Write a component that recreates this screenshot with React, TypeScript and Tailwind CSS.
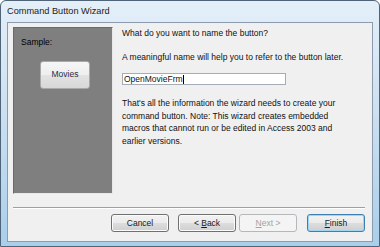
import React from 'react';

const font = { fontFamily: '"Liberation Sans", Arial, sans-serif' };

const WizardButton: React.FC<{
  label: React.ReactNode;
  variant?: 'normal' | 'default' | 'disabled';
}> = ({ label, variant = 'normal' }) => {
  const border =
    variant === 'default'
      ? 'border-[#3c7fb1] shadow-[inset_0_0_0_1px_#9fd5f5]'
      : variant === 'disabled'
        ? 'border-[#b5b8bb]'
        : 'border-[#707070] shadow-[inset_0_0_0_1px_#fbfbfb]';
  const bg =
    variant === 'disabled'
      ? 'bg-[#f4f4f4]'
      : 'bg-[linear-gradient(#f2f2f2_0%,#ebebeb_50%,#dddddd_51%,#cfcfcf_100%)]';
  const text = variant === 'disabled' ? 'text-[#a3a3a3]' : 'text-[#1a1a1a]';
  return (
    <div
      className={`w-[58px] h-[18px] rounded-[3px] border flex items-center justify-center text-[8.5px] ${border} ${bg} ${text}`}
    >
      {label}
    </div>
  );
};

export default function App() {
  return (
    <div
      className="w-[380px] h-[247px] flex flex-col bg-[linear-gradient(180deg,#e4eff8_0%,#cfe2f2_40%,#a9cfea_100%)] border border-[#4f6479] rounded-t-[6px]"
      style={font}
    >
      {/* title bar */}
      <div className="h-[21px] flex items-center pl-[6px] text-[9.2px] text-[#1b1b1b] shrink-0">
        Command Button Wizard
      </div>

      {/* client area */}
      <div className="mx-[6px] h-[220px] border border-[#8c9cae] bg-[#f0f0f0] flex flex-col">
        <div className="flex pt-[4px] pl-[5px]">
          {/* sample panel */}
          <div className="w-[100px] h-[167px] bg-[#7f7f7f] border border-[#6a6a6a] border-r-[#e8e8e8] border-b-[#e8e8e8] flex flex-col">
            <div className="pl-[7px] pt-[8px] text-[8.5px] text-black">Sample:</div>
            <div className="ml-[26px] mt-[12px] w-[50px] h-[28px] rounded-[3px] border border-[#a9a9a9] bg-[linear-gradient(#f6f6f6_0%,#eeeeee_50%,#e2e2e2_51%,#d8d8d8_100%)] flex items-center justify-center text-[8.5px] text-[#1f2a44]">
              Movies
            </div>
          </div>

          {/* instructions */}
          <div className="ml-[9px] flex flex-col text-[8.5px] text-[#111] leading-[12px]">
            <div>What do you want to name the button?</div>
            <div className="mt-[12px]">A meaningful name will help you to refer to the button later.</div>
            <div className="mt-[10px] w-[164px] h-[12px] bg-white border border-[#a5acb5] flex items-center pl-[1px] leading-none">
              OpenMovieFrm<span className="w-px h-[9px] bg-black" />
            </div>
            <div className="mt-[12px] w-[222px] leading-[12.5px]">
              That's all the information the wizard needs to create your command button. Note: This wizard creates
              embedded macros that cannot run or be edited in Access 2003 and earlier versions.
            </div>
          </div>
        </div>

        {/* separator */}
        <div className="mt-[13px] ml-[5px] mr-[7px] h-[2px] border-t border-[#a0a0a0] border-b border-b-white" />

        {/* buttons */}
        <div className="mt-[5px] flex justify-end pr-[7px]">
          <WizardButton label="Cancel" />
          <div className="ml-[9px]">
            <WizardButton
              label={
                <span>
                  &lt; <u>B</u>ack
                </span>
              }
            />
          </div>
          <div className="ml-[3px]">
            <WizardButton
              variant="disabled"
              label={
                <span>
                  <u>N</u>ext &gt;
                </span>
              }
            />
          </div>
          <div className="ml-[10px]">
            <WizardButton
              variant="default"
              label={
                <span>
                  <u>F</u>inish
                </span>
              }
            />
          </div>
        </div>
      </div>
    </div>
  );
}
